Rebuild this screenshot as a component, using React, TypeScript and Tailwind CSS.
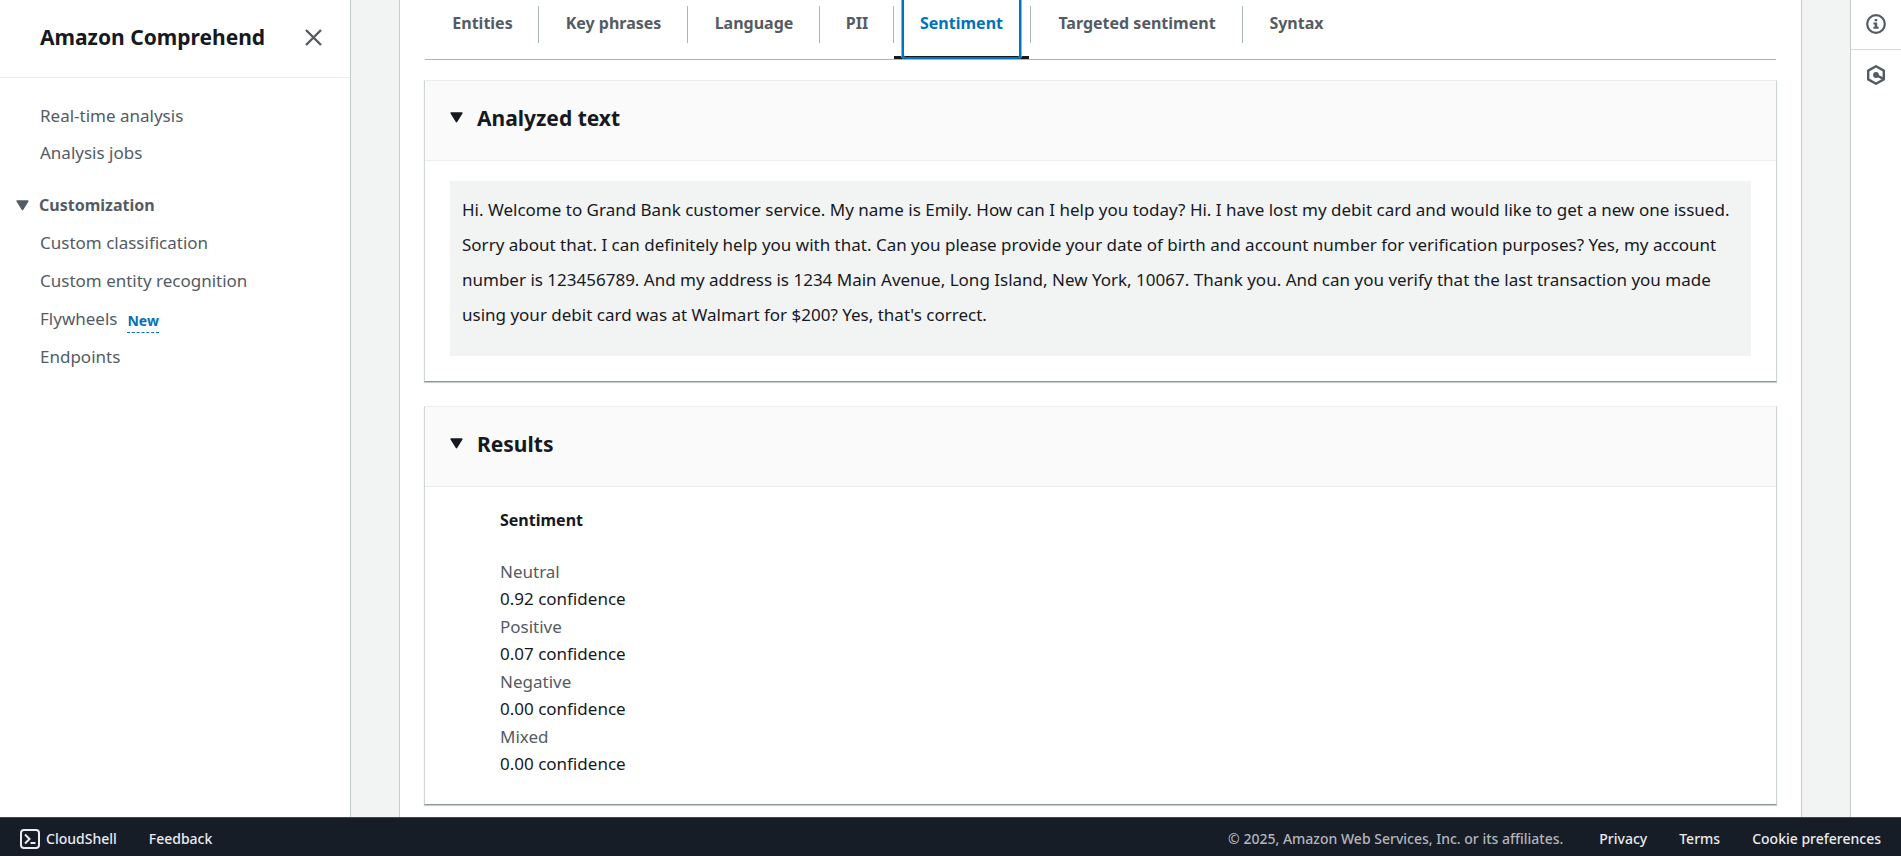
import type { ReactNode } from 'react';

const tabs = [
  { label: 'Entities', width: 'w-[113px]' },
  { label: 'Key phrases', width: 'w-[149px]' },
  { label: 'Language', width: 'w-[132px]' },
  { label: 'PII', width: 'w-[74px]' },
  { label: 'Sentiment', width: 'w-[137px]', active: true },
  { label: 'Targeted sentiment', width: 'w-[212px]' },
  { label: 'Syntax', width: 'w-[107px]' },
];

const scores = [
  { name: 'Neutral', value: '0.92' },
  { name: 'Positive', value: '0.07' },
  { name: 'Negative', value: '0.00' },
  { name: 'Mixed', value: '0.00' },
];

const customLinks = [
  { label: 'Custom classification' },
  { label: 'Custom entity recognition' },
  { label: 'Flywheels', isNew: true },
  { label: 'Endpoints' },
];

function Caret() {
  return (
    <svg width="13" height="11" viewBox="0 0 13 11" aria-hidden="true" className="shrink-0">
      <path d="M1.2 1h10.6L6.5 9.6z" fill="currentColor" stroke="currentColor" strokeWidth="1.6" strokeLinejoin="round" />
    </svg>
  );
}

function Card({ title, children }: { title: string; children: ReactNode }) {
  return (
    <section className="border border-t-[#eaeded] border-x-[#d0d6d6] border-b-[#8a9497] bg-white shadow-[0_1px_1px_0_rgba(0,28,36,0.2)]">
      <h2 className="flex h-20 border-b border-[#eaeded] bg-[#fafafa] px-[25px] pb-[6px]">
        <button type="button" aria-expanded="true" className="flex items-center gap-[14px] text-[21px] font-bold text-[#16191f]">
          <Caret />
          {title}
        </button>
      </h2>
      {children}
    </section>
  );
}

function Sidebar() {
  return (
    <nav aria-label="Amazon Comprehend" className="w-[351px] shrink-0 border-r border-[#c4cccc] bg-white text-[17px] text-[#545b64]">
      <div className="flex h-[78px] items-center justify-between border-b border-[#eaeded] pr-7 pb-[3px] pl-10">
        <h1 className="text-[21px] font-bold text-[#16191f]">Amazon Comprehend</h1>
        <button type="button" aria-label="Close navigation">
          <svg width="17" height="17" viewBox="0 0 17 17" fill="none" stroke="currentColor" strokeWidth="2.4" aria-hidden="true">
            <path d="M1 1l15 15M16 1L1 16" />
          </svg>
        </button>
      </div>
      <ul className="pt-[19px] pl-10">
        {['Real-time analysis', 'Analysis jobs'].map((label) => (
          <li key={label} className="flex h-[37px] items-center">
            <a href="#">{label}</a>
          </li>
        ))}
      </ul>
      <button type="button" aria-expanded="true" className="mt-[15px] flex h-[38px] items-center gap-[10px] pl-4 text-base font-bold">
        <Caret />
        Customization
      </button>
      <ul className="pl-10">
        {customLinks.map(({ label, isNew }) => (
          <li key={label} className="flex h-[38px] items-center gap-[10px]">
            <a href="#">{label}</a>
            {isNew && (
              <button type="button" className="mt-1 border-b border-dashed border-[#0073bb] text-sm leading-[22px] font-bold text-[#0073bb]">
                New
              </button>
            )}
          </li>
        ))}
      </ul>
    </nav>
  );
}

function Tabs() {
  return (
    <div role="tablist" className="flex h-[60px] border-b border-[#aab7b8] pl-px">
      {tabs.map(({ label, width, active }, i) => (
        <div key={label} className={`${width} relative flex shrink-0 justify-center`}>
          {active ? (
            <div className="mr-[2px] flex flex-1 justify-center border-b-3 border-[#16191f]">
              <button
                type="button"
                role="tab"
                aria-selected="true"
                className="-mb-[3px] flex w-[119px] justify-center rounded-b border-2 border-t-0 border-[#0073bb] pt-[11px] font-bold text-[#0073bb] shadow-[-1px_0_0_0_#7fb9dd,1px_0_0_0_#7fb9dd]"
              >
                {label}
              </button>
            </div>
          ) : (
            <button type="button" role="tab" aria-selected="false" className="flex flex-1 justify-center pt-[11px] font-bold">
              {label}
            </button>
          )}
          {i < tabs.length - 1 && <span className="absolute top-[6px] right-0 h-[37px] w-px bg-[#aab7b8]" />}
        </div>
      ))}
    </div>
  );
}

function Footer() {
  return (
    <footer className="flex h-[39px] shrink-0 items-center justify-between border-t border-[#414750] bg-[#161d27] px-5 pt-1 text-sm font-medium text-[#ebebf0]">
      <div className="flex items-center gap-8">
        <button type="button" className="flex items-center gap-[6px]">
          <svg width="20" height="20" viewBox="0 0 20 20" fill="none" stroke="currentColor" strokeWidth="2" aria-hidden="true">
            <rect x="1" y="1" width="18" height="18" rx="3" />
            <path d="M5 5.5L9.5 10 5 14.5M10.5 14h5" />
          </svg>
          CloudShell
        </button>
        <a href="#">Feedback</a>
      </div>
      <div className="flex items-center gap-8">
        <span className="mr-1 text-[#b4b4bb]">© 2025, Amazon Web Services, Inc. or its affiliates.</span>
        <a href="#">Privacy</a>
        <a href="#">Terms</a>
        <a href="#">Cookie preferences</a>
      </div>
    </footer>
  );
}

export default function App() {
  return (
    <div className="flex h-screen flex-col overflow-hidden bg-white font-['Noto_Sans',sans-serif] text-base leading-6 text-[#16191f]">
      <div className="flex min-h-0 flex-1">
        <Sidebar />
        <div className="flex min-w-0 flex-1 bg-[#f2f3f3] px-12">
          <main className="min-w-0 flex-1 overflow-hidden border-x border-[#c4cccc] bg-white px-6">
            <div className="px-px text-[#545b64]">
              <Tabs />
            </div>
            <div className="mt-5 flex flex-col gap-6">
              <Card title="Analyzed text">
                <div className="px-[25px] pt-5 pb-[25px]">
                  <p className="bg-[#f2f3f3] px-3 pt-[11px] pb-6 text-[17px] leading-[35px]">
                    Hi. Welcome to Grand Bank customer service. My name is Emily. How can I help you today? Hi. I have
                    lost my debit card and would like to get a new one issued. Sorry about that. I can definitely help
                    you with that. Can you please provide your date of birth and account number for verification
                    purposes? Yes, my account number is 123456789. And my address is 1234 Main Avenue, Long Island, New
                    York, 10067. Thank you. And can you verify that the last transaction you made using your debit card
                    was at Walmart for $200? Yes, that's correct.
                  </p>
                </div>
              </Card>
              <Card title="Results">
                <div className="px-[75px] pt-[19px] pb-[25px]">
                  <h3 className="leading-[28px] font-bold">Sentiment</h3>
                  <dl className="mt-6 pb-px text-[17px]">
                    {scores.map(({ name, value }) => (
                      <div key={name} className="h-[55px]">
                        <dt className="leading-[27px] text-[#545b64]">{name}</dt>
                        <dd className="leading-[28px]">{value} confidence</dd>
                      </div>
                    ))}
                  </dl>
                </div>
              </Card>
            </div>
          </main>
        </div>
        <aside aria-label="Tools" className="flex w-[51px] shrink-0 flex-col border-l border-[#c4cccc] bg-white text-[#545b64]">
          <button type="button" aria-label="Info" className="flex h-[50px] items-center justify-center border-b border-[#d5dbdb] pb-[2px]">
            <svg width="20" height="20" viewBox="0 0 20 20" aria-hidden="true">
              <circle cx="10" cy="10" r="8.8" fill="none" stroke="currentColor" strokeWidth="2.2" />
              <path d="M8.7 5h2.5v2.2H8.7zM7.4 8.4h3.8v4.4h1.4v2H7.4v-2h1.3v-2.4H7.4z" fill="currentColor" />
            </svg>
          </button>
          <button type="button" aria-label="Resources" className="flex h-[50px] items-center justify-center">
            <svg width="20" height="20" viewBox="0 0 20 20" fill="none" stroke="currentColor" strokeWidth="2.4" aria-hidden="true">
              <path d="M10 1.2l7.8 4.4v8.8L10 18.800l-7.8-4.4V5.600z" strokeLinejoin="round" />
              <circle cx="10" cy="10" r="2.9" fill="currentColor" stroke="none" />
              <path d="M10 10l7 3.600" />
            </svg>
          </button>
        </aside>
      </div>
      <Footer />
    </div>
  );
}
